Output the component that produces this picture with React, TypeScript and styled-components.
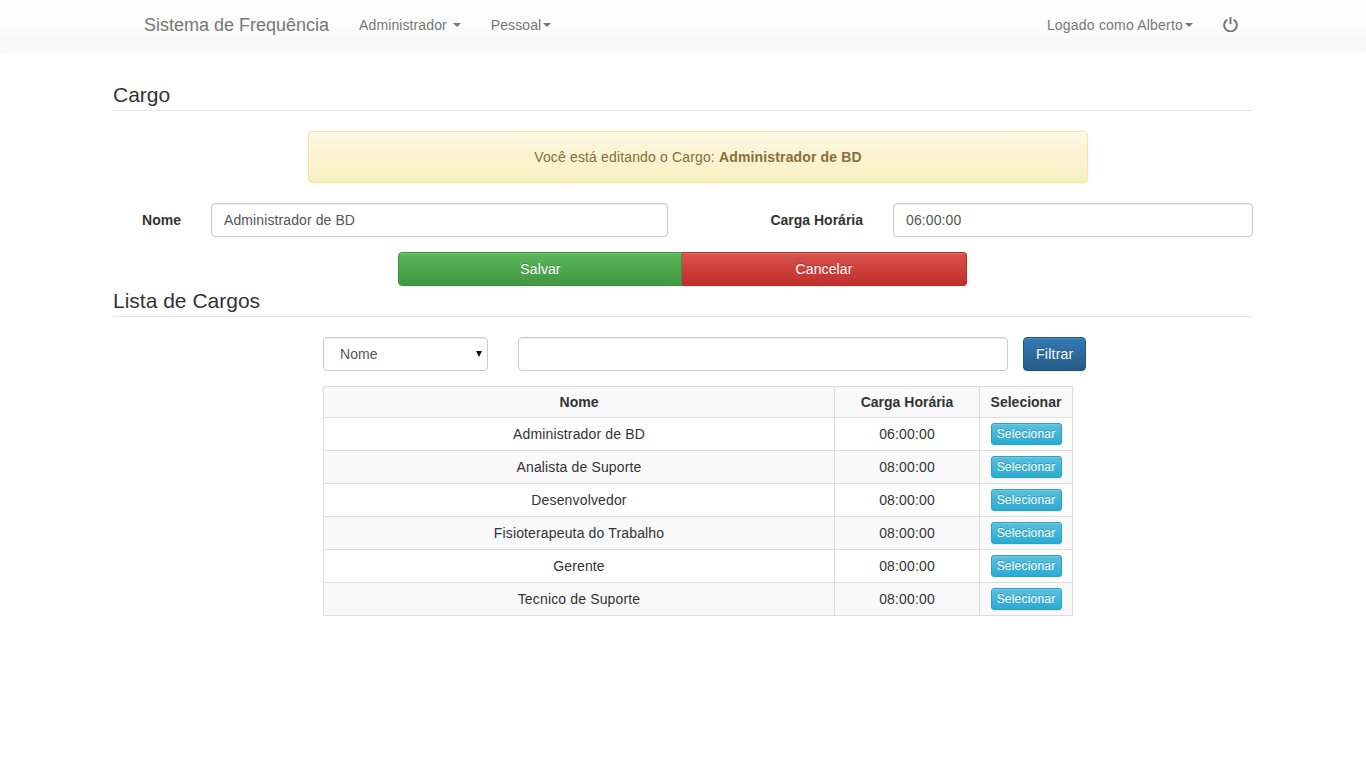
import { createGlobalStyle, styled } from "styled-components";

const GlobalStyle = createGlobalStyle`
  * {
    box-sizing: border-box;
  }
  html, body {
    margin: 0;
    background: #fff;
    color: #333;
    font-family: "Liberation Sans", Arial, sans-serif;
    font-size: 14px;
    line-height: 20px;
  }
`;

const Navbar = styled.nav`
  display: flex;
  align-items: flex-start;
  height: 51px;
  padding: 0 113px 0 129px;
  background: linear-gradient(to bottom, #fff 0%, #f8f8f8 100%);
  box-shadow: 0 1px 3px rgba(0, 0, 0, 0.05);
`;

const Brand = styled.a`
  padding: 15px;
  font-size: 18px;
  line-height: 20px;
  color: #777;
`;

const NavLink = styled.a<{ $spacing?: number }>`
  display: flex;
  align-items: center;
  height: 50px;
  padding: 0 15px;
  color: #777;
  letter-spacing: ${(p) => p.$spacing ?? 0.1}px;
  white-space: pre;
`;

const NavRight = styled.div`
  display: flex;
  margin-left: auto;
`;

const Caret = styled.span`
  display: inline-block;
  width: 0;
  height: 0;
  margin-left: 2px;
  border-top: 4px solid #777;
  border-left: 4px solid transparent;
  border-right: 4px solid transparent;
`;

const PowerIcon = styled.svg`
  display: block;
  width: 15px;
  height: 16px;
  margin-top: -2px;
  fill: none;
  stroke: #777;
  stroke-width: 2;
`;

const Main = styled.main`
  padding: 0 113px;
`;

const SectionTitle = styled.h2<{ $top: number }>`
  margin: ${(p) => p.$top}px 0 0;
  padding-bottom: 4px;
  border-bottom: 1px solid #e5e5e5;
  font-size: 21px;
  font-weight: 400;
  line-height: 22px;
  color: #333;
`;

const Alert = styled.div`
  width: 780px;
  margin: 20px 0 0 195px;
  padding: 15px;
  border: 1px solid #f5e79e;
  border-radius: 4px;
  background: linear-gradient(to bottom, #fcf8e3 0%, #f8efc0 100%);
  box-shadow: inset 0 1px 0 rgba(255, 255, 255, 0.25), 0 1px 2px rgba(0, 0, 0, 0.05);
  color: #8a6d3b;
  letter-spacing: 0.15px;
  text-align: center;
`;

const FormRow = styled.div`
  display: flex;
  margin-top: 20px;
`;

const Field = styled.div<{ $width: number }>`
  display: flex;
  align-items: center;
  gap: 30px;
  width: ${(p) => p.$width}px;
`;

const Label = styled.label<{ $width: number }>`
  flex: none;
  width: ${(p) => p.$width}px;
  font-weight: 700;
  text-align: right;
`;

const Input = styled.input<{ $width?: number }>`
  display: block;
  width: ${(p) => (p.$width ? `${p.$width}px` : "100%")};
  height: 34px;
  min-width: 0;
  padding: 6px 12px;
  border: 1px solid #ccc;
  border-radius: 4px;
  background: #fff;
  box-shadow: inset 0 1px 1px rgba(0, 0, 0, 0.075);
  color: #555;
  font: inherit;
  letter-spacing: 0.1px;
`;

const ButtonRow = styled.div`
  display: flex;
  margin: 15px 0 0 285px;
`;

const Button = styled.button<{ $from: string; $to: string; $border: string; $width: number }>`
  width: ${(p) => p.$width}px;
  height: 34px;
  padding: 6px 12px;
  border: 1px solid ${(p) => p.$border};
  border-radius: 4px;
  background: linear-gradient(to bottom, ${(p) => p.$from} 0%, ${(p) => p.$to} 100%);
  box-shadow: inset 0 1px 0 rgba(255, 255, 255, 0.15), 0 1px 1px rgba(0, 0, 0, 0.075);
  color: #fff;
  font: inherit;
  letter-spacing: 0.1px;
  text-shadow: 0 -1px 0 rgba(0, 0, 0, 0.2);
`;

const SaveButton = styled(Button)`
  padding-left: 13px;
  border-radius: 4px 0 0 4px;
`;

const CancelButton = styled(Button)`
  border-left: 0;
  border-radius: 0 4px 4px 0;
`;

const ListPanel = styled.section`
  margin: 20px 0 0 210px;
`;

const FilterRow = styled.div`
  display: flex;
  gap: 30px;
`;

const SelectBox = styled.div`
  position: relative;
  width: 165px;

  &::after {
    content: "";
    position: absolute;
    top: 14px;
    right: 6px;
    border-top: 6px solid #111;
    border-left: 3.5px solid transparent;
    border-right: 3.5px solid transparent;
    pointer-events: none;
  }
`;

const Select = styled.select`
  display: block;
  width: 100%;
  height: 34px;
  padding: 6px 16px;
  border: 1px solid #ccc;
  border-radius: 4px;
  background: #fff;
  box-shadow: inset 0 1px 1px rgba(0, 0, 0, 0.075);
  color: #555;
  font: inherit;
  letter-spacing: 0.1px;
  appearance: none;
`;

const FilterButton = styled(Button)`
  margin-left: -15px;
  letter-spacing: 0.25px;
`;

const Table = styled.table`
  width: 749px;
  margin-top: 15px;
  border-collapse: collapse;
  table-layout: fixed;
  text-align: center;
`;

const Th = styled.th<{ $width: number }>`
  width: ${(p) => p.$width}px;
  height: 31px;
  padding: 4px 5px;
  border: 1px solid #ddd;
  background: #f9f9f9;
  font-weight: 700;
`;

const Row = styled.tr`
  &:nth-child(even) {
    background: #f9f9f9;
  }
`;

const Td = styled.td`
  height: 33px;
  padding: 5px;
  border: 1px solid #ddd;
  letter-spacing: 0.15px;
`;

const SelectButton = styled.button`
  display: block;
  width: 71px;
  height: 22px;
  margin: 0 auto;
  padding: 1px 5px;
  border: 1px solid #28a4c9;
  border-radius: 3px;
  background: linear-gradient(to bottom, #5bc0de 0%, #2aabd2 100%);
  box-shadow: inset 0 1px 0 rgba(255, 255, 255, 0.15), 0 1px 1px rgba(0, 0, 0, 0.075);
  color: #fff;
  font: inherit;
  font-size: 12px;
  line-height: 18px;
  letter-spacing: 0.2px;
  text-shadow: 0 -1px 0 rgba(0, 0, 0, 0.2);
`;

const cargos = [
  { nome: "Administrador de BD", carga: "06:00:00" },
  { nome: "Analista de Suporte", carga: "08:00:00" },
  { nome: "Desenvolvedor", carga: "08:00:00" },
  { nome: "Fisioterapeuta do Trabalho", carga: "08:00:00" },
  { nome: "Gerente", carga: "08:00:00" },
  { nome: "Tecnico de Suporte", carga: "08:00:00" },
];

const App = () => {
  return (
    <>
      <GlobalStyle />
      <Navbar>
        <Brand>Sistema de Frequência</Brand>
        <NavLink>
          {"Administrador "}
          <Caret />
        </NavLink>
        <NavLink>
          Pessoal
          <Caret />
        </NavLink>
        <NavRight>
          <NavLink $spacing={0.2}>
            Logado como Alberto
            <Caret />
          </NavLink>
          <NavLink>
            <PowerIcon viewBox="0 0 15 16">
              <path d="M4.4 3.6A6.3 6.3 0 1 0 10.6 3.6" />
              <path d="M7.5 1V8" />
            </PowerIcon>
          </NavLink>
        </NavRight>
      </Navbar>
      <Main>
        <SectionTitle $top={33}>Cargo</SectionTitle>
        <Alert>
          Você está editando o Cargo: <strong>Administrador de BD</strong>
        </Alert>
        <FormRow>
          <Field $width={555}>
            <Label $width={68}>Nome</Label>
            <Input defaultValue="Administrador de BD" />
          </Field>
          <Field $width={585}>
            <Label $width={195}>Carga Horária</Label>
            <Input defaultValue="06:00:00" />
          </Field>
        </FormRow>
        <ButtonRow>
          <SaveButton $from="#5cb85c" $to="#419641" $border="#3e8f3e" $width={284}>
            Salvar
          </SaveButton>
          <CancelButton $from="#d9534f" $to="#c12e2a" $border="#b92c28" $width={285}>
            Cancelar
          </CancelButton>
        </ButtonRow>
        <SectionTitle $top={4}>Lista de Cargos</SectionTitle>
        <ListPanel>
          <FilterRow>
            <SelectBox>
              <Select defaultValue="Nome">
                <option>Nome</option>
                <option>Carga Horária</option>
              </Select>
            </SelectBox>
            <Input $width={490} />
            <FilterButton $from="#337ab7" $to="#265a88" $border="#245580" $width={63}>
              Filtrar
            </FilterButton>
          </FilterRow>
          <Table>
            <thead>
              <tr>
                <Th $width={511}>Nome</Th>
                <Th $width={145}>Carga Horária</Th>
                <Th $width={93}>Selecionar</Th>
              </tr>
            </thead>
            <tbody>
              {cargos.map((cargo) => (
                <Row key={cargo.nome}>
                  <Td>{cargo.nome}</Td>
                  <Td>{cargo.carga}</Td>
                  <Td>
                    <SelectButton>Selecionar</SelectButton>
                  </Td>
                </Row>
              ))}
            </tbody>
          </Table>
        </ListPanel>
      </Main>
    </>
  );
};

export default App;
